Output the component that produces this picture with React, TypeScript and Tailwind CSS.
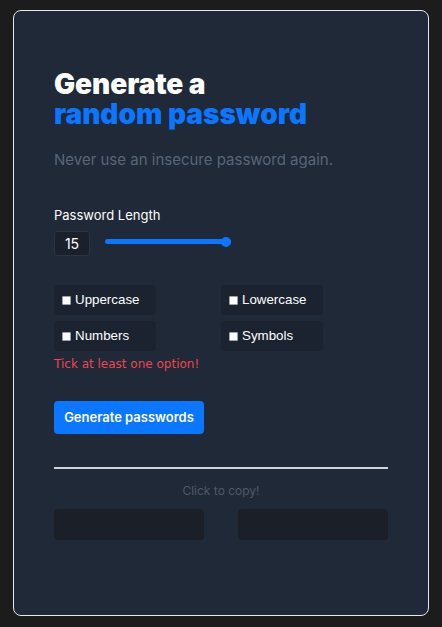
import React from "react";

const Check = ({ label }: { label: string }) => (
  <div className="w-[102px] h-[30px] bg-[#1b2330] rounded-[4px] flex items-center pl-[8px] gap-[4px]">
    <span className="w-[9px] h-[9px] bg-white border border-[#9ca3af] rounded-[1px]" />
    <span className="text-white text-[13.33px] leading-none" style={{ fontFamily: '"Liberation Sans", Arial, sans-serif' }}>
      {label}
    </span>
  </div>
);

export default function App() {
  return (
    <div className="w-full h-[627px] bg-[#1c1c1c] flex justify-center pt-[10px]" style={{ fontFamily: 'Inter, "Noto Sans", sans-serif' }}>
      <div className="w-[416px] h-[606px] bg-[#1f2937] border border-[#e5e7eb] rounded-lg px-[40px] pt-[58px] flex flex-col">
        <h1 className="text-[28px] font-black text-white">
          <span className="block h-[30px] leading-[30px]">Generate a</span>
          <span className="block h-[30px] leading-[30px] text-[#0b76ff]">random password</span>
        </h1>
        <p className="mt-[21px] text-[15px] leading-[20px] text-[#58667a]">Never use an insecure password again.</p>

        <div className="mt-[37px] text-[13px] leading-[16px] text-white">Password Length</div>
        <div className="mt-[8px] flex items-center">
          <div className="w-[36px] h-[25px] bg-[#1a202c] border border-[#2c3442] rounded-[3px] flex items-center justify-center text-white text-[14px]">
            15
          </div>
          <div className="ml-[15px] mb-[4px] relative w-[126px] h-[5px] bg-[#0b76ff] rounded-full">
            <div className="absolute right-0 top-[-2.5px] w-[10px] h-[10px] rounded-full bg-[#0b76ff]" />
          </div>
        </div>

        <div className="mt-[29px] grid grid-cols-2 gap-y-[6px]">
          <Check label="Uppercase" />
          <Check label="Lowercase" />
          <Check label="Numbers" />
          <Check label="Symbols" />
        </div>
        <div className="mt-[6px] text-[12px] leading-[14px] text-[#f0464f]" style={{ fontFamily: '"DejaVu Sans", Verdana, sans-serif' }}>
          Tick at least one option!
        </div>

        <button className="mt-[30px] w-[150px] h-[33px] bg-[#0b76ff] rounded-[4px] text-white text-[13px] font-semibold">
          Generate passwords
        </button>

        <div className="mt-[33px] h-[2px] bg-[#d4d4d8]" />
        <div className="mt-[14px] text-center text-[12px] leading-[16px] text-[#4e5968]">Click to copy!</div>
        <div className="mt-[10px] flex justify-between">
          <div className="w-[150px] h-[31px] bg-[#1a1f28] rounded-[4px]" />
          <div className="w-[150px] h-[31px] bg-[#1a1f28] rounded-[4px]" />
        </div>
      </div>
    </div>
  );
}
